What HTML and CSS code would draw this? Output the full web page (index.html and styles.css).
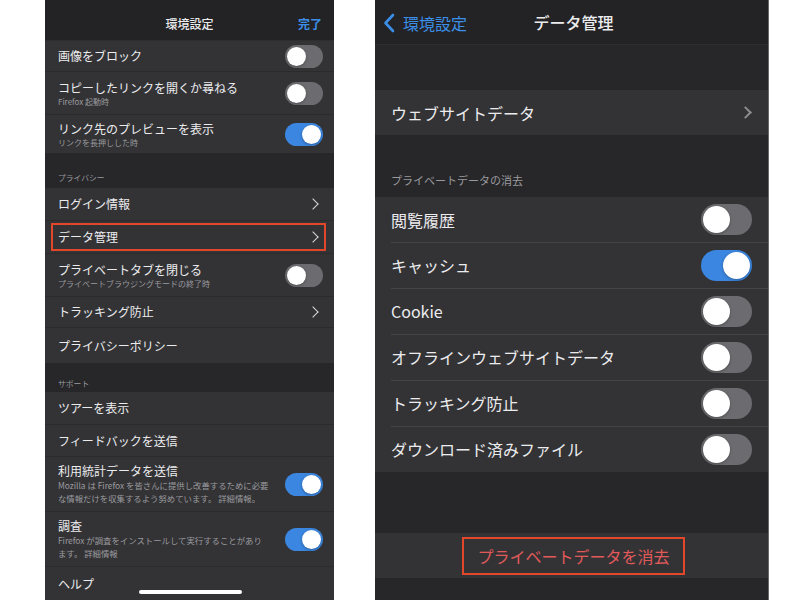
FILE: index.html
```html
<!DOCTYPE html>
<html lang="ja">
<head>
    <meta charset="UTF-8">
    <meta name="viewport" content="width=device-width, initial-scale=1.0">
    <title>環境設定 / データ管理</title>
    <link rel="stylesheet" href="styles.css">
</head>
<body>
    <div class="page">
        <!-- left: settings screen -->
        <div class="phone small">
            <div class="navbar">
                <span class="nav-title">環境設定</span>
                <span class="nav-done">完了</span>
            </div>
            <div class="group">
                <div class="row h31">
                    <div class="text"><div class="label">画像をブロック</div></div>
                    <span class="toggle"></span>
                </div>
                <div class="row h43">
                    <div class="text">
                        <div class="label">コピーしたリンクを開くか尋ねる</div>
                        <div class="sub">Firefox 起動時</div>
                    </div>
                    <span class="toggle"></span>
                </div>
                <div class="row h38">
                    <div class="text">
                        <div class="label">リンク先のプレビューを表示</div>
                        <div class="sub">リンクを長押しした時</div>
                    </div>
                    <span class="toggle on"></span>
                </div>
            </div>
            <div class="section first">プライバシー</div>
            <div class="group">
                <div class="row h33">
                    <div class="text"><div class="label">ログイン情報</div></div>
                    <span class="chevron"></span>
                </div>
                <div class="row h33 marked">
                    <div class="text"><div class="label">データ管理</div></div>
                    <span class="chevron"></span>
                </div>
                <div class="row h43">
                    <div class="text">
                        <div class="label">プライベートタブを閉じる</div>
                        <div class="sub">プライベートブラウジングモードの終了時</div>
                    </div>
                    <span class="toggle"></span>
                </div>
                <div class="row h31">
                    <div class="text"><div class="label">トラッキング防止</div></div>
                    <span class="chevron"></span>
                </div>
                <div class="row h35">
                    <div class="text"><div class="label">プライバシーポリシー</div></div>
                </div>
            </div>
            <div class="section">サポート</div>
            <div class="group">
                <div class="row h33">
                    <div class="text"><div class="label">ツアーを表示</div></div>
                </div>
                <div class="row h32">
                    <div class="text"><div class="label">フィードバックを送信</div></div>
                </div>
                <div class="row h55">
                    <div class="text">
                        <div class="label">利用統計データを送信</div>
                        <div class="sub desc">Mozilla は Firefox を皆さんに提供し改善するために必要<br>な情報だけを収集するよう努めています。 詳細情報。</div>
                    </div>
                    <span class="toggle on"></span>
                </div>
                <div class="row h55">
                    <div class="text">
                        <div class="label">調査</div>
                        <div class="sub desc">Firefox が調査をインストールして実行することがあり<br>ます。 詳細情報</div>
                    </div>
                    <span class="toggle on"></span>
                </div>
                <div class="row h33">
                    <div class="text"><div class="label">ヘルプ</div></div>
                </div>
            </div>
            <span class="home-bar"></span>
        </div>

        <!-- right: data management screen -->
        <div class="phone large">
            <div class="navbar">
                <span class="nav-back">
                    <svg width="12" height="20" viewBox="0 0 12 20"><path d="M10 2 L2.5 10 L10 18" fill="none" stroke="#3b8fe8" stroke-width="2.6" stroke-linecap="round" stroke-linejoin="round"/></svg>
                    環境設定
                </span>
                <span class="nav-title">データ管理</span>
            </div>
            <div class="spacer s45"></div>
            <div class="group">
                <div class="row">
                    <div class="label">ウェブサイトデータ</div>
                    <span class="chevron grey"></span>
                </div>
            </div>
            <div class="section">プライベートデータの消去</div>
            <div class="group inset">
                <div class="row">
                    <div class="label">閲覧履歴</div>
                    <span class="toggle"></span>
                </div>
                <div class="row">
                    <div class="label">キャッシュ</div>
                    <span class="toggle on"></span>
                </div>
                <div class="row">
                    <div class="label">Cookie</div>
                    <span class="toggle"></span>
                </div>
                <div class="row">
                    <div class="label">オフラインウェブサイトデータ</div>
                    <span class="toggle"></span>
                </div>
                <div class="row">
                    <div class="label">トラッキング防止</div>
                    <span class="toggle"></span>
                </div>
                <div class="row">
                    <div class="label">ダウンロード済みファイル</div>
                    <span class="toggle"></span>
                </div>
            </div>
            <div class="spacer s61"></div>
            <div class="group">
                <div class="row clear">
                    <span class="clear-btn">プライベートデータを消去</span>
                </div>
            </div>
        </div>
    </div>
</body>
</html>
```

FILE: styles.css
```css
body {
    margin: 0;
    background: #fff;
    font-family: "Noto Sans CJK JP", "Noto Sans", sans-serif;
    color: #ececee;
}

.page {
    display: flex;
    gap: 41px;
    padding-left: 45px;
    height: 600px;
    overflow: hidden;
}

.phone {
    position: relative;
    background: #27272a;
    height: 600px;
    overflow: hidden;
}

.phone.small {
    width: 289px;
}

.phone.large {
    width: 393px;
    border-right: 1px solid #6a6a6d;
}

/* nav bars */
.navbar {
    position: relative;
    display: flex;
    align-items: center;
    justify-content: center;
    background: #232325;
    border-bottom: 1px solid #2e2e31;
}

.small .navbar {
    height: 40px;
}

.large .navbar {
    height: 44px;
}

.nav-title {
    font-weight: 500;
}

.small .nav-title {
    font-size: 12px;
    padding-top: 6px;
}

.large .nav-title {
    font-size: 16px;
    padding-left: 4px;
}

.nav-done {
    position: absolute;
    right: 12px;
    top: 15px;
    font-size: 12px;
    font-weight: 700;
    color: #3b8fe8;
}

.nav-back {
    position: absolute;
    left: 8px;
    top: 11px;
    display: flex;
    align-items: center;
    gap: 8px;
    font-size: 16px;
    color: #3b8fe8;
}

/* groups and rows */
.group {
    background: #333336;
}

.row {
    position: relative;
    display: flex;
    align-items: center;
    justify-content: space-between;
    box-sizing: border-box;
}

.small .row {
    padding: 0 11px 0 13px;
    border-bottom: 1px solid #2b2b2e;
}

.small .row:last-child {
    border-bottom: none;
}

.h31 { height: 31px; }
.h32 { height: 32px; }
.h33 { height: 33px; }
.h35 { height: 35px; }
.h38 { height: 38px; }
.h43 { height: 43px; }
.h55 { height: 55px; }

.small .label {
    font-size: 12px;
    line-height: 16px;
}

.sub {
    font-size: 8px;
    line-height: 11px;
    color: #9a9a9e;
}

.sub.desc {
    font-size: 8.4px;
    line-height: 13px;
    white-space: nowrap;
}

.marked::after {
    content: "";
    position: absolute;
    left: 6px;
    right: 8px;
    top: 2px;
    bottom: 2px;
    border: 2px solid #e2472b;
}

.large .row {
    height: 46px;
    padding: 0 16px 0 16px;
}

.large .group > .row:first-child {
    height: 45px;
}

.large .label {
    font-size: 16px;
}

.inset .row + .row::before {
    content: "";
    position: absolute;
    left: 16px;
    right: 0;
    top: 0;
    border-top: 1px solid #444447;
}

/* section headers */
.section {
    color: #9a9a9e;
}

.small .section {
    font-size: 7.8px;
    height: 29px;
    padding: 15px 0 0 13px;
    box-sizing: border-box;
}

.small .section.first {
    height: 35px;
    padding-top: 19px;
}

.large .section {
    font-size: 11px;
    height: 62px;
    padding: 37px 0 0 16px;
    box-sizing: border-box;
}

.spacer.s45 { height: 45px; }
.spacer.s61 { height: 61px; }

/* controls */
.toggle {
    position: relative;
    flex: none;
    background: #6c6c70;
    border-radius: 20px;
}

.toggle::after {
    content: "";
    position: absolute;
    top: 2px;
    left: 2px;
    background: #fff;
    border-radius: 50%;
    box-shadow: 0 1px 3px rgba(0, 0, 0, 0.3);
}

.toggle.on {
    background: #3b86e0;
}

.small .toggle {
    width: 38px;
    height: 23px;
}

.small .toggle::after {
    width: 19px;
    height: 19px;
}

.small .toggle.on::after {
    left: 17px;
}

.large .toggle {
    width: 51px;
    height: 31px;
}

.large .toggle::after {
    width: 27px;
    height: 27px;
}

.large .toggle.on::after {
    left: 22px;
}

.chevron {
    flex: none;
    width: 7px;
    height: 7px;
    margin-right: 6px;
    border-top: 1.3px solid #d8d8da;
    border-right: 1.3px solid #d8d8da;
    transform: rotate(45deg);
}

.chevron.grey {
    border-color: #8c8c90;
    border-width: 2px;
    margin-right: 2px;
}

.row.clear {
    justify-content: center;
    height: 47px;
}

.clear-btn {
    font-size: 16px;
    line-height: 24px;
    padding: 5px 13px;
    color: #e15a5a;
    border: 2px solid #e2472b;
    margin-left: 4px;
}

.home-bar {
    position: absolute;
    left: 94px;
    bottom: 6px;
    width: 103px;
    height: 4px;
    border-radius: 2px;
    background: #fff;
}
```
